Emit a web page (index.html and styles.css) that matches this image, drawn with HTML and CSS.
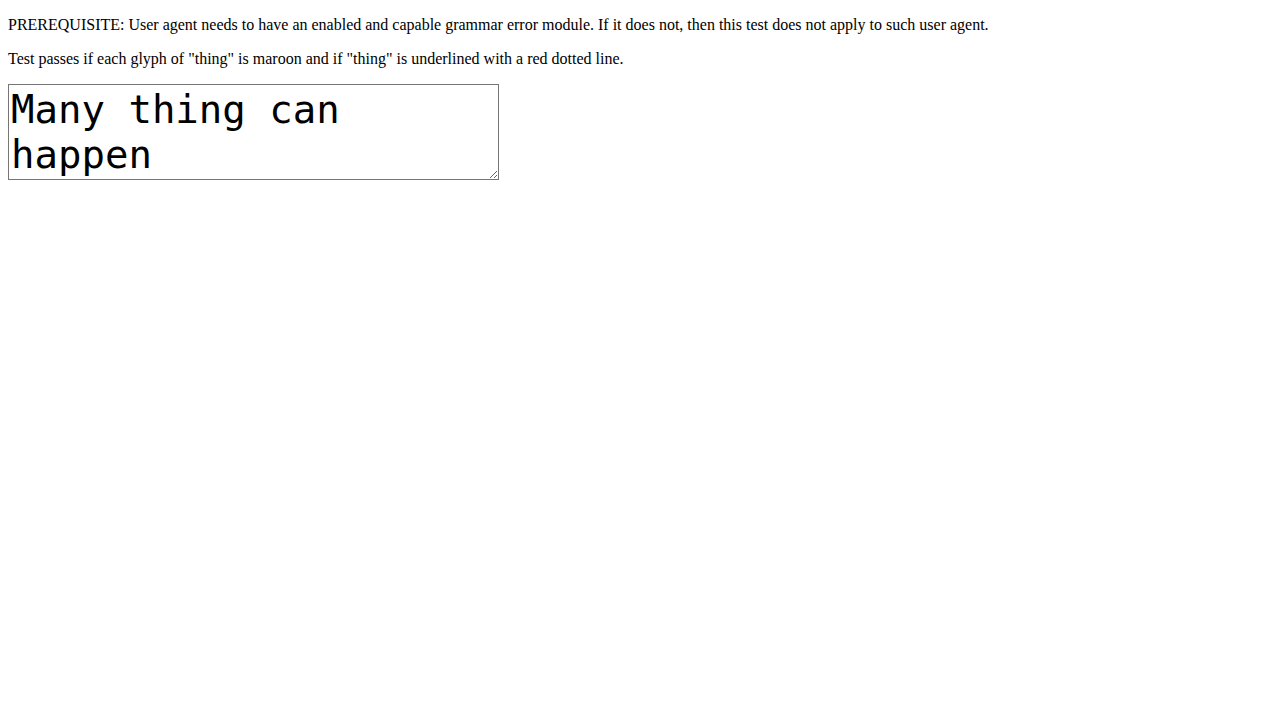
FILE: index.html
```html
<!DOCTYPE html>
<html>
<head>
<meta charset="utf-8">
<link rel="stylesheet" href="styles.css">
</head>
<body class="page">
<p class="note">PREREQUISITE: User agent needs to have an enabled and capable grammar error module. If it does not, then this test does not apply to such user agent.</p>
<p class="note">Test passes if each glyph of "thing" is maroon and if "thing" is underlined with a red dotted line.</p>
<textarea class="sample" spellcheck="false">Many thing can happen</textarea>
</body>
</html>
```
FILE: styles.css
```css
.page {
  margin: 0 8px 8px;
  padding: 0;
  font-family: "Liberation Serif", serif;
  font-size: 16px;
  background: #fff;
  color: #000;
}
.note {
  margin: 16px 0;
}
.sample {
  font-family: "DejaVu Sans Mono", monospace;
  font-size: 39px;
  width: 491px;
  height: 96px;
  box-sizing: border-box;
  padding: 2px;
  border: 1px solid #767676;
  margin: 0;
  color: #000;
  display: inline-block;
  vertical-align: bottom;
}
```
